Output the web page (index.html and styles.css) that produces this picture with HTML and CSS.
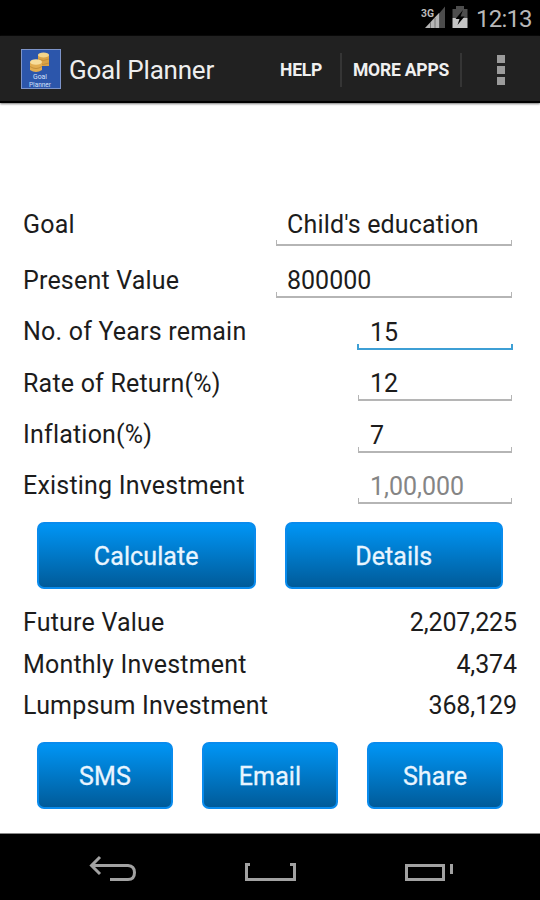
FILE: index.html
```
<!DOCTYPE html>
<html lang="en">
<head>
<meta charset="utf-8">
<title>Goal Planner</title>
<link rel="stylesheet" href="styles.css">
</head>
<body>
<div class="screen">
  <div class="status">
    <svg class="signal" width="26" height="24" viewBox="0 0 26 24">
      <path d="M4 23L18 8V23Z" fill="#b5b5b5"/>
      <path d="M18.500 8L24 1.500V23H18.500Z" fill="#4c4c4c"/>
      <path d="M9.500 17V23M14 13V23M18.500 8V23" stroke="#666" stroke-width=".8"/>
      <text class="network" x="0" y="12" textLength="13" lengthAdjust="spacingAndGlyphs">3G</text>
    </svg>
    <svg class="battery" width="16" height="24" viewBox="0 0 16 24">
      <path d="M4 1H12V4H15.500V13H.5V4H4Z" fill="#4d4d4d"/>
      <path d="M.5 13H15.500V23H.5Z" fill="#c4c4c4"/>
      <path d="M11 5L3.500 14H7.500L5.500 20L12.500 11.500H8.500Z" fill="#000"/>
    </svg>
    <span class="clock">12:13</span>
  </div>
  <header class="bar">
    <svg class="logo" width="40" height="40" viewBox="0 0 40 40">
      <rect x=".5" y=".5" width="39" height="39" fill="#2c56ab" stroke="#7d94c9"/>
      <path d="M17 6V17H28V6Z" fill="#d9a347"/>
      <ellipse cx="22.500" cy="6" rx="5.500" ry="2.500" fill="#f3d48a"/>
      <path d="M17 10Q22 13 28 10M17 14Q22 17 28 14" stroke="#c48f3a" fill="none"/>
      <path d="M9 13V21Q15 25 21 21V13Z" fill="#e2ad51"/>
      <ellipse cx="15" cy="13" rx="6" ry="2.800" fill="#f7dc9a"/>
      <path d="M9 17.500Q15 21.500 21 17.500" stroke="#c48f3a" fill="none"/>
      <text class="logo-text" x="19" y="30" textLength="14" lengthAdjust="spacingAndGlyphs">Goal</text>
      <text class="logo-text" x="19" y="37.500" textLength="22" lengthAdjust="spacingAndGlyphs">Planner</text>
    </svg>
    <h1 class="title">Goal Planner</h1>
    <nav class="actions">
      <span class="action help">HELP</span>
      <span class="action more">MORE APPS</span>
      <span class="overflow"><i></i><i></i><i></i></span>
    </nav>
  </header>
  <main class="content">
    <div class="form">
      <span class="label">Goal</span><span class="field tall">Child's education</span>
      <span class="label">Present Value</span><span class="field">800000</span>
      <span class="label">No. of Years remain</span><span class="field short focused">15</span>
      <span class="label">Rate of Return(%)</span><span class="field short">12</span>
      <span class="label">Inflation(%)</span><span class="field short">7</span>
      <span class="label">Existing Investment</span><span class="field short hint">1,00,000</span>
    </div>
    <div class="buttons two"><span class="button">Calculate</span><span class="button">Details</span></div>
    <div class="results">
      <div class="result"><span class="label">Future Value</span><span class="number">2,207,225</span></div>
      <div class="result"><span class="label">Monthly Investment</span><span class="number">4,374</span></div>
      <div class="result"><span class="label">Lumpsum Investment</span><span class="number">368,129</span></div>
    </div>
    <div class="buttons three"><span class="button">SMS</span><span class="button">Email</span><span class="button">Share</span></div>
  </main>
  <footer class="navbar">
    <svg width="540" height="66" viewBox="0 0 540 66" fill="none" stroke="#a2a2a2" stroke-width="3">
      <path d="M100 23L91.500 31.500L100 40M92 31.500H128Q134.500 32 134.500 38.500Q134.500 45.500 128 45.500H110"/>
      <path d="M250 30.500H246.500V45.500H294.500V30.500H290"/>
      <path d="M406.500 31.500H443.500V45.500H406.500ZM451.500 30V40"/>
    </svg>
  </footer>
</div>
</body>
</html>
```
FILE: styles.css
```
body { margin: 0; background: #fff; font-family: Roboto, sans-serif; }
.screen { width: 540px; height: 900px; display: flex; flex-direction: column; overflow: hidden; }
.status { height: 36px; flex: none; box-sizing: border-box; padding: 5px 8px 0 0; background: #000; display: flex; justify-content: flex-end; }
.network { font: bold 11.500px Roboto, sans-serif; fill: #bbb; }
.battery { margin-left: 5px; }
.clock { margin-left: 8px; width: 56px; font-size: 24px; letter-spacing: -.8px; line-height: 28px; color: #b8b8b8; white-space: nowrap; }
.bar { height: 67px; flex: none; box-sizing: border-box; padding-left: 21px; border-bottom: 2px solid #000; background: #212121; box-shadow: 0 1px 2px #777; display: flex; align-items: center; }
.logo { margin-top: 1px; }
.logo-text { font: 7.500px Roboto, sans-serif; fill: #d4e0fa; text-anchor: middle; }
.title { margin: 3px 0 0 8px; width: 200px; font-size: 26px; letter-spacing: -.22px; line-height: 32px; font-weight: 400; color: #eee; white-space: nowrap; }
.actions { flex: 1; display: flex; align-items: center; color: #f0f0f0; font-size: 17.500px; letter-spacing: -.2px; font-weight: 700; line-height: 34px; margin-top: 2px; }
.action { box-sizing: border-box; border-right: 2px solid #353535; white-space: nowrap; }
.help { width: 73px; padding-left: 11px; }
.more { width: 120px; padding-left: 11px; }
.overflow { margin-left: 35px; display: grid; gap: 3px; }
.overflow i { width: 8px; height: 8px; background: #9b9b9b; }
.content { flex: 1; padding-top: 91px; color: #1c1c1c; font-size: 25px; }
.form { display: grid; grid-template-columns: 1fr auto; grid-template-rows: 60px 52px 51px 52px 51px 51px; align-items: center; padding: 0 28px 0 23px; }
.label, .field { white-space: nowrap; }
.label { letter-spacing: .2px; }
.field { position: relative; box-sizing: border-box; width: 236px; height: 36px; line-height: 37px; padding-left: 11px; border-bottom: 2px solid #b5b5b5; }
.tall { height: 44px; line-height: 46px; letter-spacing: .17px; }
.short { width: 154px; padding-left: 12px; justify-self: end; }
.field::before { content: ""; position: absolute; left: 0; right: 0; bottom: 0; height: 4px; border: solid #b5b5b5; border-width: 0 1px; }
.focused { border-color: #3d9fd5; }
.focused::before { border-color: #3d9fd5; border-width: 0 2px; left: -1px; right: -1px; bottom: -2px; height: 6px; }
.hint { color: #858585; }
.buttons { display: grid; gap: 29px; padding: 0 37px; height: 67px; grid-template-rows: 67px; }
.two { grid-template-columns: 1fr 1fr; margin-top: 11px; }
.three { grid-template-columns: repeat(3, 1fr); margin-top: 15px; }
.button { box-sizing: border-box; border: 2px solid #098bed; border-radius: 7px; background: linear-gradient(#0095f5, #005b99); color: #e9f5ff; line-height: 66px; letter-spacing: .1px; text-align: center; -webkit-text-stroke: .3px #e9f5ff; }
.results { display: grid; grid-template-rows: 42px 41px 42px; padding: 13px 23px 0; line-height: 42px; }
.result { display: flex; justify-content: space-between; }
.number { letter-spacing: -.1px; }
.navbar { height: 66px; flex: none; background: #000; box-shadow: 0 -1px #888; }
.navbar svg { display: block; }
```
